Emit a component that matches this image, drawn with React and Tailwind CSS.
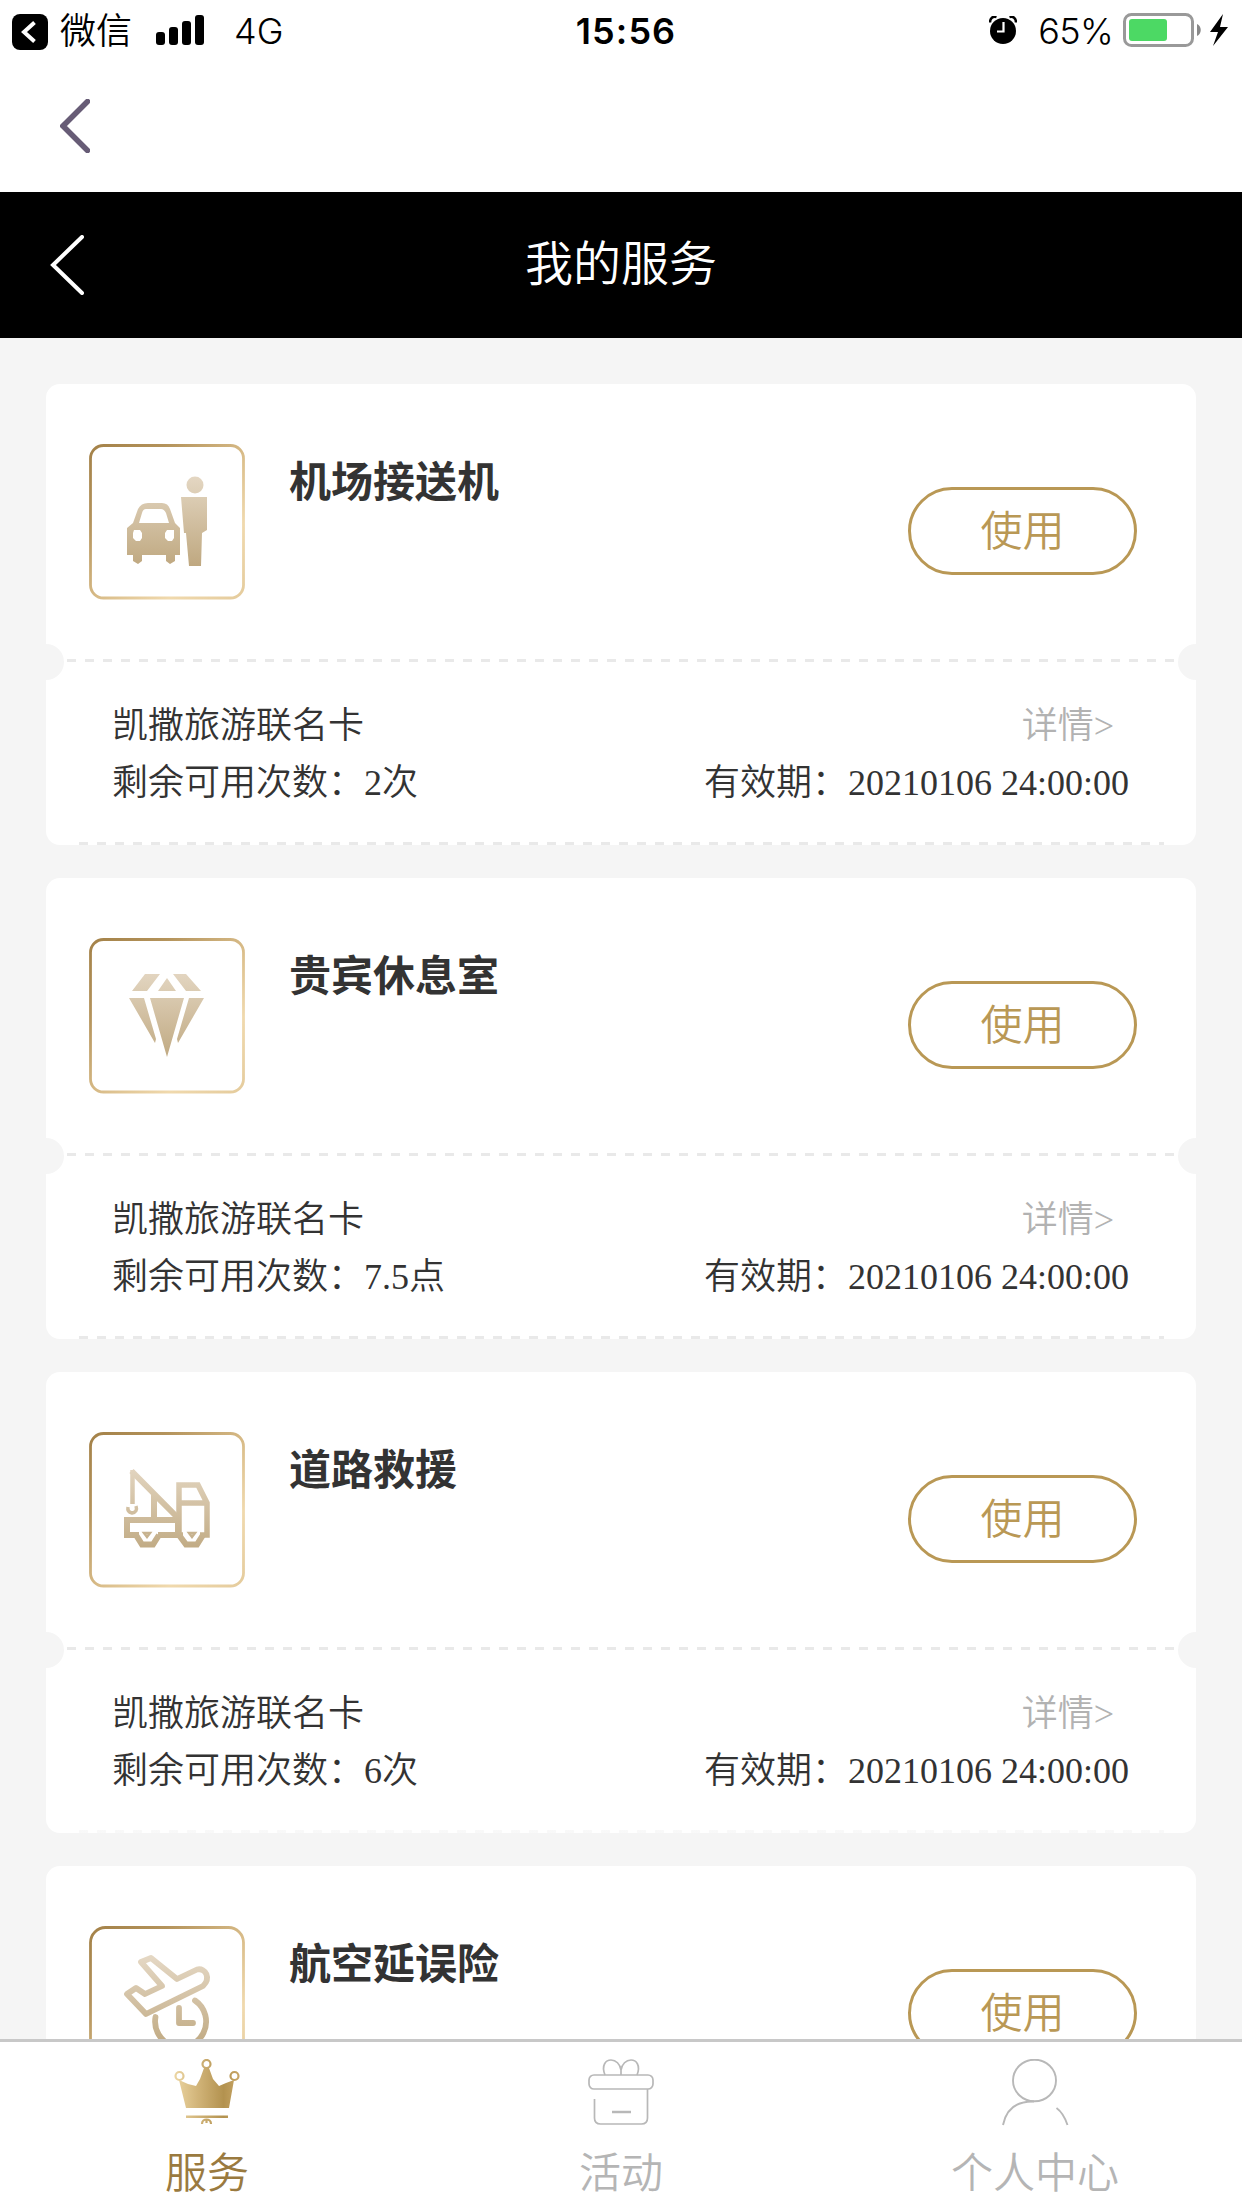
import React from "react";

const CJK = "font-['Noto_Sans_CJK_SC',sans-serif]";

function StatusBar() {
  return (
    <div className="flex h-[60px] shrink-0 items-start justify-between pl-3 pr-[14px] font-['Inter','Noto_Sans_CJK_SC',sans-serif] text-[36px] leading-[60px] text-black">
      <div className="flex w-[400px] items-start">
        <svg className="mt-[14px] h-9 w-9" viewBox="0 0 36 36">
          <rect width="36" height="36" rx="8" />
          <path d="M22.5 8.5 12 18l10.500 9.500" fill="none" stroke="#fff" strokeWidth="4" />
        </svg>
        <span className="ml-3 font-['Noto_Sans_CJK_SC',sans-serif] font-[350] leading-[56px]">微信</span>
        <svg className="ml-6 mt-[15px] h-[30px] w-[48px]" viewBox="0 0 48 30">
          <rect x="0" y="17" width="9" height="13" rx="3" />
          <rect x="13" y="12" width="9" height="18" rx="3" />
          <rect x="26" y="6" width="9" height="24" rx="3" />
          <rect x="39" y="0" width="9" height="30" rx="3" />
        </svg>
        <span className="ml-[30px] mt-px font-[350]">4G</span>
      </div>
      <div className="ml-[12px] mt-px font-semibold tracking-[1.1px]">15:56</div>
      <div className="flex w-[400px] items-start justify-end">
        <svg className="mt-4 h-7 w-7" viewBox="0 0 28 28">
          <circle cx="14" cy="15" r="13" />
          <path d="M1 6.500C1 2 4 0 7.500 1M27 6.500C27 2 24 0 20.500 1" fill="none" stroke="#000" strokeWidth="2.500" />
          <path d="M14.500 6v9.500H8" fill="none" stroke="#fff" strokeWidth="2.200" />
        </svg>
        <span className="ml-[21px] mt-px font-[350] tracking-[-0.7px]">65%</span>
        <svg className="ml-[10px] mt-[13px] h-[34px] w-[79px]" viewBox="0 0 79 34">
          <rect x="1.500" y="1.500" width="68" height="31" rx="7" fill="none" stroke="#999" strokeWidth="3" />
          <rect x="6" y="6" width="38" height="22" rx="3" fill="#4cd964" />
          <path d="M74 11c5 2 5 10 0 12z" fill="#888" />
        </svg>
        <svg className="ml-[8px] mt-[14px] h-8 w-[18px]" viewBox="0 0 18 32">
          <path d="M13 0 0 18h8L3 32 18 13h-8z" />
        </svg>
      </div>
    </div>
  );
}

function CarIcon() {
  return (
    <g fill="url(#glyph)">
      <circle cx="106" cy="41" r="8.500" />
      <path d="M92 53h26v33l-5 3-1 33h-12l-3-33h-2z" />
      <path
        fillRule="evenodd"
        d="M59 59h14q6 0 8 6l5 14 5 5v27h-5v6l-5 3-4-3v-6H53v6l-4 3-5-3v-6h-6V84l6-5 5-14q3-6 10-6zM57 65q-3 0-4 4l-3 10h30l-3-10q-2-4-5-4zM45 86l-1 3v5l3 3h4l2-3v-5l-2-3zM78 86l-2 3v5l3 3h4l2-3v-8z"
      />
    </g>
  );
}

function DiamondIcon() {
  return (
    <path
      fill="url(#glyph)"
      d="M56 36h15L58 53H43zM78 40l9 13H69zM84 36h13l15 17H97zM40 60h15l12 41-1 4zM61 60h34l-17 59zM100 60h15l-26 45-1-4z"
    />
  );
}

function TowIcon() {
  return (
    <g fill="none" stroke="url(#glyph)" strokeWidth="6">
      <path d="M50 103H38V88H89V103H69" />
      <path d="M43.500 38v34" strokeWidth="4.500" />
      <path d="M42.500 39 90 87M65 86V62l24 24" />
      <path d="M39 75q-1 5 4 6 6-1 4-7" strokeWidth="3.500" />
      <path d="M94 103h-4V53h19l9 18V103h-7M92 71h25" strokeWidth="5.500" />
      <path d="M47 103l6 9.500h11l6-9.500M90 103l7 9.500h11l6-9.500" />
      <path d="M55 101h6l-3 4zM100 101h6l-3 4z" strokeWidth="2.500" />
    </g>
  );
}

function FlightIcon() {
  return (
    <g fill="none" stroke="url(#glyph)" strokeWidth="5.800" strokeLinecap="round" strokeLinejoin="round">
      <path d="M52 36l10-4 26 21 20-9.500c9-2 14 9 6 16.500L57 88 38 68l9-6 9 6 17-8z" />
      <path d="M66.500 91A25.500 25.500 0 1 0 106 74.500" />
      <path d="M90 82v15h14" />
    </g>
  );
}

function ServiceIcon({ children, radius = 13 }) {
  return (
    <svg className="h-[156px] w-[156px]" viewBox="0 0 156 156">
      <rect x="1.500" y="1.500" width="153" height="152.500" rx={radius} fill="none" stroke="url(#frame)" strokeWidth="2.800" />
      {children}
    </svg>
  );
}

function Dashes({ className }) {
  return (
    <div
      className={
        "h-[3px] bg-[repeating-linear-gradient(90deg,#e9e9e9_0_9px,transparent_9px_18px)] " + className
      }
    />
  );
}

function ServiceCard({ title, remaining, icon, radius, faint }) {
  return (
    <section className="relative h-[461px] shrink-0 overflow-hidden rounded-[14px] bg-white text-[#333]">
      <div className="flex h-[275px] items-start pl-[43px] pr-[59px] pt-[60px]">
        <ServiceIcon radius={radius}>{icon}</ServiceIcon>
        <h2 className="ml-[44px] mt-[5px] flex-1 text-[42px] font-bold leading-[60px]">{title}</h2>
        <button className="mt-[43px] h-[88px] w-[229px] rounded-full border-[3px] border-[#b99855] pb-[6px] text-[42px] font-[350] leading-[74px] text-[#b99855]">
          使用
        </button>
      </div>
      <Dashes className="mx-[21px]" />
      {remaining && (
        <div className="h-[180px] pl-[66px] pr-[67px] pt-[36px] font-['Liberation_Serif','Noto_Sans_CJK_SC',serif] text-[36px] font-[350] leading-[57px]">
          <div className="flex justify-between">
            <span>凯撒旅游联名卡</span>
            <span className="mr-[15px] text-[#b2b2b2]">详情&gt;</span>
          </div>
          <div className="flex justify-between">
            <span>剩余可用次数：{remaining}</span>
            <span>有效期：20210106 24:00:00</span>
          </div>
        </div>
      )}
      <Dashes className={faint ? "ml-[33px] mr-[32px] opacity-30" : "ml-[33px] mr-[32px]"} />
      <i className="absolute -left-[18px] top-[260px] h-9 w-9 rounded-full bg-[#f5f5f5]" />
      <i className="absolute -right-[18px] top-[260px] h-9 w-9 rounded-full bg-[#f5f5f5]" />
    </section>
  );
}

function CrownIcon() {
  return (
    <g>
      <g fill="none" stroke="url(#crown)" strokeWidth="2.200">
        <circle cx="5.500" cy="17" r="4" />
        <circle cx="32.500" cy="5" r="4" />
        <circle cx="60.500" cy="17" r="4" />
        <path d="M28 65c0-6 9-6 9 0M32.500 60v4" />
      </g>
      <path
        fill="url(#crown)"
        d="M5 21l9 4 8 2 4-7 4-11h5l4 11 6 7 7-3 8-3-5 28H12zM12 56.500h42v2.500H12z"
      />
    </g>
  );
}

function GiftIcon() {
  return (
    <g fill="none" stroke="#b8b8b8" strokeWidth="1.700">
      <rect x="1" y="16" width="64" height="14" rx="5" />
      <path d="M6.500 40v19q0 6 6 6h41q6 0 6-6V30" />
      <path d="M17 16C13 6 18 1 23 1s9 4 10 10c1-6 5-10 10-10s10 5 6 15M33 10v6" />
      <path d="M24 53h19" strokeWidth="2.500" />
    </g>
  );
}

function PersonIcon() {
  return (
    <g fill="none" stroke="#b8b8b8" strokeWidth="1.900">
      <ellipse cx="32.500" cy="21.500" rx="21.500" ry="20.800" />
      <path d="M1 66C4 51 14 42 32 42.500M54.500 49q7 5 11 17" />
    </g>
  );
}

const services = [
  { title: "机场接送机", remaining: "2次", icon: <CarIcon /> },
  { title: "贵宾休息室", remaining: "7.5点", icon: <DiamondIcon /> },
  { title: "道路救援", remaining: "6次", icon: <TowIcon />, faint: true },
  { title: "航空延误险", icon: <FlightIcon />, radius: 15 },
];

const tabs = [
  { label: "服务", icon: <CrownIcon />, color: "text-[#9a7a3f]" },
  { label: "活动", icon: <GiftIcon />, color: "text-[#b5b5b5]" },
  { label: "个人中心", icon: <PersonIcon />, color: "text-[#b5b5b5]" },
];

export default function App() {
  return (
    <div className={"flex h-[2208px] w-[1242px] flex-col overflow-hidden bg-white " + CJK}>
      <svg className="absolute h-0 w-0">
        <defs>
          <linearGradient id="frame" x1="0" y1="0" x2="156" y2="156" gradientUnits="userSpaceOnUse">
            <stop offset="0" stopColor="#a38148" />
            <stop offset="0.250" stopColor="#b4935b" />
            <stop offset="0.550" stopColor="#dcc08d" />
            <stop offset="0.750" stopColor="#f0d9ad" />
            <stop offset="1" stopColor="#e4cb9c" />
          </linearGradient>
          <linearGradient id="glyph" x1="0" y1="32" x2="0" y2="122" gradientUnits="userSpaceOnUse">
            <stop offset="0" stopColor="#e4d7c3" />
            <stop offset="1" stopColor="#bfa880" />
          </linearGradient>
          <linearGradient id="crown" x1="0" y1="0" x2="66" y2="0" gradientUnits="userSpaceOnUse">
            <stop offset="0" stopColor="#ecd6a3" />
            <stop offset="0.350" stopColor="#d2b57a" />
            <stop offset="0.750" stopColor="#b3924f" />
            <stop offset="1" stopColor="#c9a767" />
          </linearGradient>
        </defs>
      </svg>

      <StatusBar />
      <div className="h-[132px] shrink-0 pl-[60px] pt-[39px]">
        <svg className="h-[54px] w-[30px]" viewBox="0 0 30 54">
          <path d="M27.500 2.500 3 27l24.500 24.500" fill="none" stroke="#675c76" strokeWidth="5.500" strokeLinecap="round" />
        </svg>
      </div>
      <header className="flex h-[146px] shrink-0 items-center justify-between bg-black px-[50px] text-white">
        <svg className="h-[60px] w-[34px]" viewBox="0 0 34 60">
          <path d="M32 2 3 30l29 28" fill="none" stroke="#fff" strokeWidth="4" strokeLinecap="round" />
        </svg>
        <h1 className="pb-[10px] text-[48px] font-[350] leading-[70px]">我的服务</h1>
        <span className="w-[34px]" />
      </header>
      <main className="flex min-h-0 flex-1 flex-col gap-[33px] overflow-hidden bg-[#f5f5f5] px-[46px] pt-[46px]">
        {services.map((s) => (
          <ServiceCard key={s.title} {...s} />
        ))}
      </main>
      <nav className="grid h-[169px] shrink-0 grid-cols-3 border-t-[3px] border-[#c8c8c8] bg-white">
        {tabs.map((t) => (
          <div key={t.label} className="flex flex-col items-center pt-[17px]">
            <svg className="h-[67px] w-[67px]" viewBox="0 0 67 67">{t.icon}</svg>
            <span className={"mt-[14px] text-[42px] font-[350] leading-[60px] " + t.color}>{t.label}</span>
          </div>
        ))}
      </nav>
    </div>
  );
}
